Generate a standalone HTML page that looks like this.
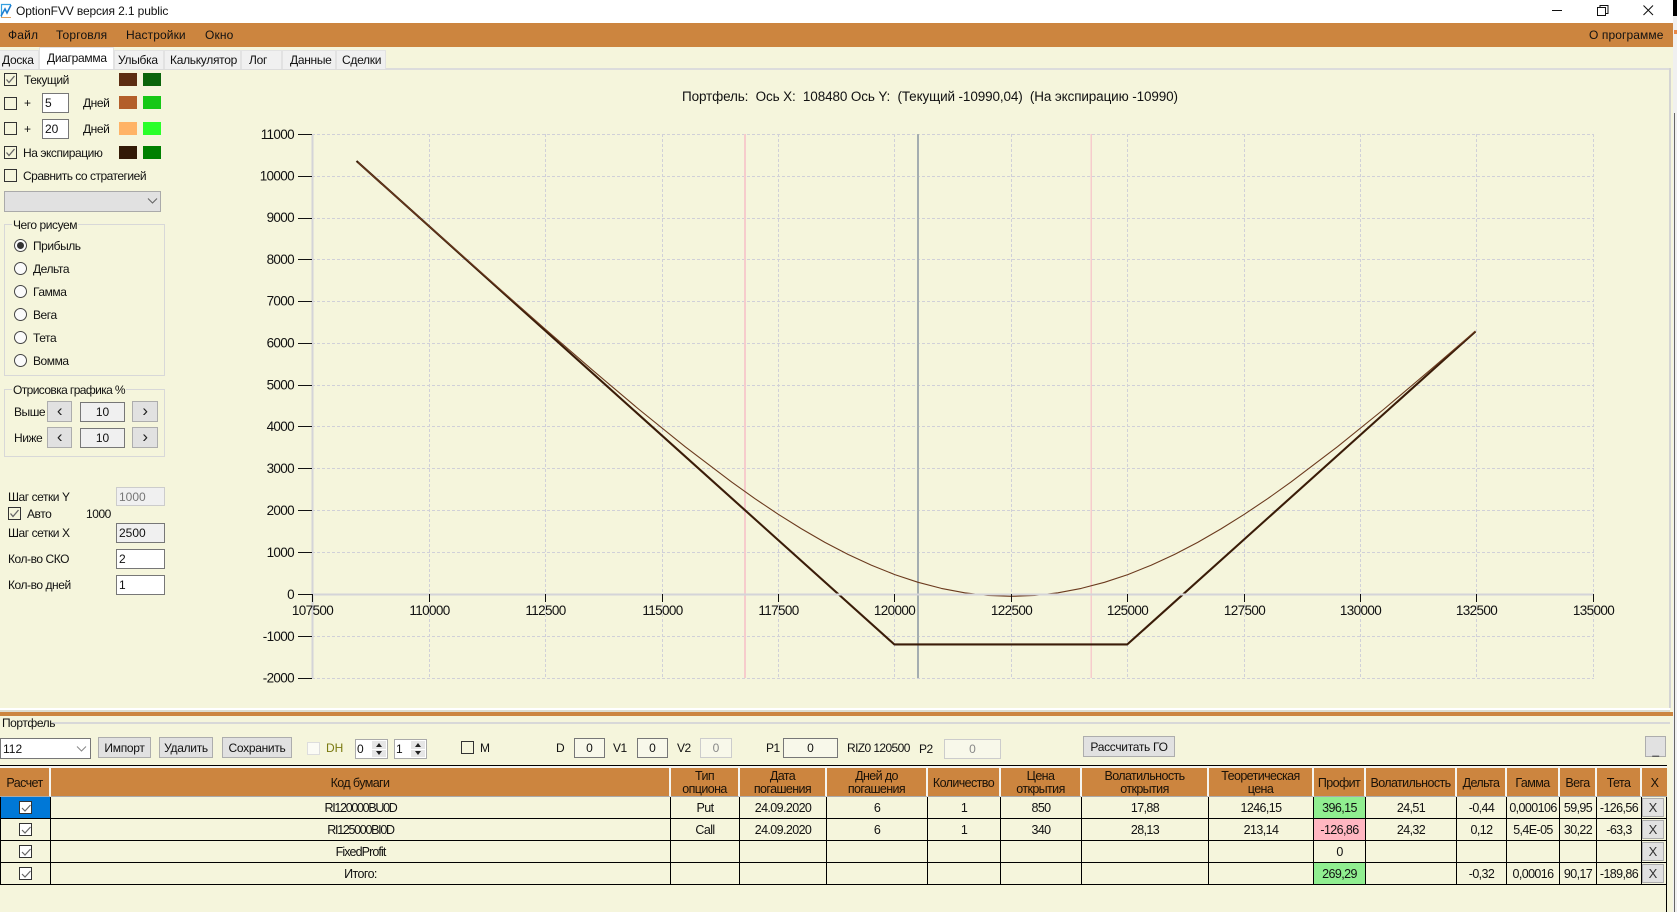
<!DOCTYPE html>
<html lang="ru"><head><meta charset="utf-8"><title>OptionFVV</title>
<style>
*{box-sizing:border-box}
html,body{margin:0;padding:0;width:1677px;height:912px;overflow:hidden;background:#f5f5dc;font-family:"Liberation Sans",sans-serif;font-size:12px;color:#111}
.a,.t,.cb,.i,.b,.r{position:absolute}
.t{white-space:nowrap;line-height:14px;letter-spacing:-.45px}
.cb{width:13px;height:13px;border:1px solid #333}
.cb svg,.tc svg{display:block}
.i{border:1px solid #777;display:flex;align-items:center;padding-left:2px;background:#fff;line-height:14px}
.c{justify-content:center;padding-left:0}
.b{background:#e1e1e1;border:1px solid #adadad;display:flex;align-items:center;justify-content:center;line-height:14px;letter-spacing:-.3px}
.ar{font-size:17px;line-height:17px;padding-bottom:2px;color:#222}
.r{width:13px;height:13px;border:1px solid #444;border-radius:50%;background:#fbfbfb}
.g{position:absolute;border:1px solid #d8d8d8}
.lg{position:absolute;background:#f5f5dc;padding:0 1px;line-height:14px;white-space:nowrap;letter-spacing:-.45px}
.tab{position:absolute;top:50px;height:19px;background:#f0f0f0;border:1px solid #e2e2e2;border-bottom:0;line-height:18px;white-space:nowrap;letter-spacing:-.3px}
table{position:absolute;left:0;top:766px;width:1667px;table-layout:fixed;border-collapse:separate;border-spacing:0;font-size:12.5px;letter-spacing:-.6px}
th{font-weight:normal;height:31px;background:#cc853f;border-top:2px solid #f5f5f0;border-bottom:1px solid #aaa;border-right:2px solid #f5f5f0;text-align:center;line-height:13px;padding:2px 0 0;color:#1a1208}
td{height:22px;border-right:1px solid #000;border-bottom:1px solid #000;text-align:center;padding:0;line-height:20px;overflow:hidden}
td:first-child{border-left:1px solid #000}
.tc svg{margin:0 auto;background:#fff;border:1px solid #333}
.xb{display:block;height:19px;margin:0 2px 0 0;background:#e1e1e1;border:1px solid #adadad;line-height:18px;letter-spacing:0;font-size:13px;color:#333}
.nr{letter-spacing:-1.3px}
</style></head><body>

<!-- title bar -->
<div class="a" style="left:0;top:0;width:1677px;height:23px;background:#fff"></div>
<svg class="a" style="left:0;top:2px" width="13" height="17" viewBox="0 0 13 17"><path d="M11 2.500H1.500V15.500" fill="none" stroke="#35a0e0" stroke-width="1.200"/><path d="M1 14 5 7 7 11 11 3" fill="none" stroke="#1f7fd0" stroke-width="1.600"/><path d="M1 15.500H11" stroke="#e0a060" stroke-width="1"/></svg>
<div class="t" style="left:16px;top:4px;letter-spacing:-.12px">OptionFVV версия 2.1 public</div>
<svg class="a" style="left:1540px;top:0" width="137" height="23" viewBox="0 0 137 23"><path d="M12 10.500H22" stroke="#111"/><path d="M57.500 7.500h8v8h-8zM60 7.500V5.500h8v8h-2.500" fill="none" stroke="#111"/><path d="M103.500 5.500 113 15M113 5.500 103.500 15" stroke="#111" fill="none"/></svg>
<div class="a" style="left:1673px;top:0;width:4px;height:16px;background:#000"></div>

<!-- menu -->
<div class="a" style="left:0;top:23px;width:1673px;height:24px;background:#cc853f"></div>
<div class="t" style="left:8px;top:28px;letter-spacing:.15px">Файл</div>
<div class="t" style="left:56px;top:28px;letter-spacing:.15px">Торговля</div>
<div class="t" style="left:126px;top:28px;letter-spacing:.1px">Настройки</div>
<div class="t" style="left:205px;top:28px;letter-spacing:.15px">Окно</div>
<div class="t" style="left:1589px;top:28px;letter-spacing:.1px">О программе</div>

<!-- right strip -->
<div class="a" style="left:1673px;top:16px;width:4px;height:896px;background:#f0f0f0"></div>
<div class="a" style="left:1674px;top:113px;width:1px;height:799px;background:#666"></div>
<div class="a" style="left:1674px;top:30px;width:3px;height:4px;background:#e88a4a"></div>

<!-- tabs -->
<div class="a" style="left:0;top:68px;width:1671px;height:1.500px;background:#dcdcdc"></div>
<div class="a" style="left:1669px;top:68px;width:2px;height:640px;background:#d4d4d4"></div>
<div class="tab" style="left:0;width:39px;padding-left:2px;border-left:0">Доска</div>
<div class="tab" style="left:39px;top:47px;height:22px;width:75px;padding-left:7px;background:#fff;line-height:20px">Диаграмма</div>
<div class="tab" style="left:114px;width:50px;padding-left:3px">Улыбка</div>
<div class="tab" style="left:164px;width:77px;padding-left:5px">Калькулятор</div>
<div class="tab" style="left:241px;width:41px;padding-left:7px">Лог</div>
<div class="tab" style="left:282px;width:54px;padding-left:7px">Данные</div>
<div class="tab" style="left:336px;width:50px;padding-left:5px">Сделки</div>

<!-- left controls -->
<div class="cb" style="left:4px;top:73px"><svg width="11" height="11"><path d="M1.500 5.500 4 8.500 9.500 2" fill="none" stroke="#666" stroke-width="1.300"/></svg></div>
<div class="t" style="left:24px;top:73px">Текущий</div>
<div class="a" style="left:119px;top:73px;width:18px;height:13px;background:#5c2d12"></div>
<div class="a" style="left:143px;top:73px;width:18px;height:13px;background:#0a640a"></div>

<div class="cb" style="left:4px;top:97px"></div>
<div class="t" style="left:24px;top:96px">+</div>
<div class="i" style="left:42px;top:93px;width:27px;height:20px">5</div>
<div class="t" style="left:83px;top:96px">Дней</div>
<div class="a" style="left:119px;top:96px;width:18px;height:13px;background:#b35f2a"></div>
<div class="a" style="left:143px;top:96px;width:18px;height:13px;background:#16c816"></div>

<div class="cb" style="left:4px;top:122px"></div>
<div class="t" style="left:24px;top:122px">+</div>
<div class="i" style="left:42px;top:119px;width:27px;height:20px">20</div>
<div class="t" style="left:83px;top:122px">Дней</div>
<div class="a" style="left:119px;top:122px;width:18px;height:13px;background:#ffb366"></div>
<div class="a" style="left:143px;top:122px;width:18px;height:13px;background:#2aff2a"></div>

<div class="cb" style="left:4px;top:146px"><svg width="11" height="11"><path d="M1.500 5.500 4 8.500 9.500 2" fill="none" stroke="#666" stroke-width="1.300"/></svg></div>
<div class="t" style="left:23px;top:146px">На экспирацию</div>
<div class="a" style="left:119px;top:146px;width:18px;height:13px;background:#331a06"></div>
<div class="a" style="left:143px;top:146px;width:18px;height:13px;background:#008000"></div>

<div class="cb" style="left:4px;top:169px"></div>
<div class="t" style="left:23px;top:169px;letter-spacing:-.5px">Сравнить со стратегией</div>
<div class="a" style="left:4px;top:191px;width:157px;height:21px;background:#e1e1e1;border:1px solid #aaa"></div>
<svg class="a" style="left:147px;top:197px" width="11" height="8"><path d="M1 1.500 5.500 6 10 1.500" fill="none" stroke="#666" stroke-width="1.100"/></svg>

<div class="g" style="left:4px;top:224px;width:161px;height:152px"></div>
<div class="lg" style="left:12px;top:218px">Чего рисуем</div>
<div class="r" style="left:14px;top:239px"></div><div class="a" style="left:17px;top:242px;width:7px;height:7px;border-radius:50%;background:#333"></div>
<div class="t" style="left:33px;top:239px">Прибыль</div>
<div class="r" style="left:14px;top:262px"></div><div class="t" style="left:33px;top:262px">Дельта</div>
<div class="r" style="left:14px;top:285px"></div><div class="t" style="left:33px;top:285px">Гамма</div>
<div class="r" style="left:14px;top:308px"></div><div class="t" style="left:33px;top:308px">Вега</div>
<div class="r" style="left:14px;top:331px"></div><div class="t" style="left:33px;top:331px">Тета</div>
<div class="r" style="left:14px;top:354px"></div><div class="t" style="left:33px;top:354px">Вомма</div>

<div class="g" style="left:4px;top:389px;width:161px;height:68px"></div>
<div class="lg" style="left:12px;top:383px;letter-spacing:-.6px">Отрисовка графика %</div>
<div class="t" style="left:14px;top:405px">Выше</div>
<div class="b ar" style="left:47px;top:401px;width:25px;height:21px">‹</div>
<div class="i c" style="left:80px;top:402px;width:45px;height:20px;background:#f0f0f0">10</div>
<div class="b ar" style="left:132px;top:401px;width:26px;height:21px">›</div>
<div class="t" style="left:14px;top:431px">Ниже</div>
<div class="b ar" style="left:47px;top:427px;width:25px;height:21px">‹</div>
<div class="i c" style="left:80px;top:428px;width:45px;height:20px;background:#f0f0f0">10</div>
<div class="b ar" style="left:132px;top:427px;width:26px;height:21px">›</div>

<div class="t" style="left:8px;top:490px">Шаг сетки Y</div>
<div class="i" style="left:116px;top:487px;width:49px;height:19px;background:#f0f0f0;border-color:#ccc;color:#777">1000</div>
<div class="cb" style="left:8px;top:507px"><svg width="11" height="11"><path d="M1.500 5.500 4 8.500 9.500 2" fill="none" stroke="#666" stroke-width="1.300"/></svg></div>
<div class="t" style="left:27px;top:507px">Авто</div>
<div class="t" style="left:86px;top:507px">1000</div>
<div class="t" style="left:8px;top:526px">Шаг сетки X</div>
<div class="i" style="left:116px;top:523px;width:49px;height:20px;background:#f0f0f0">2500</div>
<div class="t" style="left:8px;top:552px">Кол-во СКО</div>
<div class="i" style="left:116px;top:549px;width:49px;height:20px">2</div>
<div class="t" style="left:8px;top:578px">Кол-во дней</div>
<div class="i" style="left:116px;top:575px;width:49px;height:20px">1</div>

<!-- chart -->
<svg class="a" style="left:0;top:0" width="1677" height="912" viewBox="0 0 1677 912" font-family="Liberation Sans, sans-serif">
<g stroke="#d0d0d8" stroke-width="1" stroke-dasharray="3 2" fill="none">
<path d="M429.500 134V678M545.500 134V678M662.500 134V678M778.500 134V678M894.500 134V678M1011.500 134V678M1127.500 134V678M1244.500 134V678M1360.500 134V678M1476.500 134V678M1593.500 134V678"/>
<path d="M312 134.500H1594M312 176.500H1594M312 218.500H1594M312 259.500H1594M312 301.500H1594M312 343.500H1594M312 385.500H1594M312 426.500H1594M312 468.500H1594M312 510.500H1594M312 552.500H1594M312 636.500H1594M312 678.500H1594"/>
</g>
<rect x="744" y="134" width="2" height="544" fill="#f6cccc"/>
<rect x="1090.500" y="134" width="1.500" height="544" fill="#f6cccc"/>
<rect x="917" y="134" width="2" height="544" fill="#a4adb0"/>
<path d="M356.500 161 894.300 644.400H1127.300L1475.500 331.500" fill="none" stroke="#3a1c08" stroke-width="2.100" stroke-linejoin="round"/>
<path d="M358 162.500 405.500 205 452.100 246.600 498.700 288 545.300 329.100 591.900 369.600 638.500 409 685.100 446.700 731.700 482.100 755 498.700 778.300 514.300 801.600 528.900 824.900 542.400 848.200 554.500 871.500 565.200 894.800 574.600 918.100 582.300 941.400 588.400 964.700 592.800 988 595.500 1011.300 596.350 1034.600 595.500 1057.900 592.800 1081.200 588.400 1104.500 582.300 1127.800 574.600 1151.100 565.200 1174.400 554.500 1197.700 542.400 1221 528.900 1244.300 514.300 1267.600 498.700 1290.900 482.100 1337.500 446.700 1384.100 409 1430.700 369.600 1475.500 331" fill="none" stroke="#6b3a1e" stroke-width="1.100" stroke-linejoin="round"/>
<rect x="311.500" y="134" width="2" height="545" fill="#d4d4d8"/>
<rect x="312" y="593.500" width="1282" height="2" fill="#d4d4d8"/>
<g stroke="#111" stroke-width="1" fill="none">
<path d="M298 134.500H312M298 176.500H312M298 218.500H312M298 259.500H312M298 301.500H312M298 343.500H312M298 385.500H312M298 426.500H312M298 468.500H312M298 510.500H312M298 552.500H312M298 594.500H312M298 636.500H312M298 678.500H312"/>
<path d="M312.500 594V602M429.500 594V602M545.500 594V602M662.500 594V602M778.500 594V602M894.500 594V602M1011.500 594V602M1127.500 594V602M1244.500 594V602M1360.500 594V602M1476.500 594V602M1593.500 594V602"/>
</g>
<g font-size="13.500" fill="#111" text-anchor="end" letter-spacing="-.65">
<text x="294" y="139">11000</text><text x="294" y="180.500">10000</text><text x="294" y="222">9000</text><text x="294" y="264">8000</text><text x="294" y="305.500">7000</text><text x="294" y="347.500">6000</text><text x="294" y="389.500">5000</text><text x="294" y="431">4000</text><text x="294" y="473">3000</text><text x="294" y="515">2000</text><text x="294" y="557">1000</text><text x="294" y="599">0</text><text x="294" y="641">-1000</text><text x="294" y="682.500">-2000</text>
</g>
<g font-size="13.500" fill="#111" text-anchor="middle" letter-spacing="-.65">
<text x="312.500" y="615">107500</text><text x="429.500" y="615">110000</text><text x="545.500" y="615">112500</text><text x="662.500" y="615">115000</text><text x="778.500" y="615">117500</text><text x="894.500" y="615">120000</text><text x="1011.500" y="615">122500</text><text x="1127.500" y="615">125000</text><text x="1244.500" y="615">127500</text><text x="1360.500" y="615">130000</text><text x="1476.500" y="615">132500</text><text x="1593.500" y="615">135000</text>
</g>
<text x="682" y="101" font-size="13.500" fill="#111" xml:space="preserve" textLength="496">Портфель:  Ось X:  108480 Ось Y:  (Текущий -10990,04)  (На экспирацию -10990)</text>
</svg>

<!-- splitter -->
<div class="a" style="left:0;top:708px;width:1670px;height:2px;background:#fff"></div>
<div class="a" style="left:0;top:710px;width:1670px;height:2px;background:#dcdcd0"></div>
<div class="a" style="left:0;top:712px;width:1673px;height:4px;background:#cc853f"></div>

<!-- portfolio toolbar -->
<div class="a" style="left:52px;top:722px;width:1618px;height:1.500px;background:#d8d8d8"></div>
<div class="t" style="left:2px;top:716px">Портфель</div>
<div class="i" style="left:0;top:738px;width:91px;height:21px">112</div>
<svg class="a" style="left:76px;top:745px" width="11" height="8"><path d="M1 1.500 5.500 6 10 1.500" fill="none" stroke="#888" stroke-width="1"/></svg>
<div class="b" style="left:98px;top:737px;width:53px;height:21px">Импорт</div>
<div class="b" style="left:159px;top:737px;width:54px;height:21px">Удалить</div>
<div class="b" style="left:222px;top:737px;width:70px;height:21px">Сохранить</div>
<div class="a" style="left:307px;top:742px;width:13px;height:13px;background:#fbfbf5;border:1px solid #ddd"></div>
<div class="t" style="left:326px;top:741px;color:#7a7a10;letter-spacing:-.1px">DH</div>
<div class="i" style="left:355px;top:739px;width:33px;height:20px;border-color:#aaa;padding-left:1px">0</div>
<div class="a" style="left:372px;top:741px;width:14px;height:8px;background:#e6e6e6"></div><div class="a" style="left:372px;top:750px;width:14px;height:7px;background:#e6e6e6"></div>
<svg class="a" style="left:372px;top:741px" width="14" height="16"><path d="M7 2 10 6H4zM7 14 4 10H10z" fill="#222"/></svg>
<div class="i" style="left:394px;top:739px;width:33px;height:20px;border-color:#aaa;padding-left:1px">1</div>
<div class="a" style="left:411px;top:741px;width:14px;height:8px;background:#e6e6e6"></div><div class="a" style="left:411px;top:750px;width:14px;height:7px;background:#e6e6e6"></div>
<svg class="a" style="left:411px;top:741px" width="14" height="16"><path d="M7 2 10 6H4zM7 14 4 10H10z" fill="#222"/></svg>
<div class="cb" style="left:461px;top:741px"></div>
<div class="t" style="left:480px;top:741px;letter-spacing:-1px">M</div>
<div class="t" style="left:556px;top:741px">D</div>
<div class="i c" style="left:574px;top:738px;width:31px;height:20px;background:#f8f8ea">0</div>
<div class="t" style="left:613px;top:741px">V1</div>
<div class="i c" style="left:637px;top:738px;width:31px;height:20px;background:#f8f8ea">0</div>
<div class="t" style="left:677px;top:741px">V2</div>
<div class="i c" style="left:700px;top:738px;width:32px;height:20px;background:#f8f8ea;border-color:#ccc;color:#888">0</div>
<div class="t" style="left:766px;top:741px">P1</div>
<div class="i c" style="left:783px;top:738px;width:55px;height:20px;background:#f8f8ea">0</div>
<div class="t" style="left:847px;top:741px;letter-spacing:-.6px">RIZ0 120500</div>
<div class="t" style="left:919px;top:742px">P2</div>
<div class="i c" style="left:944px;top:739px;width:57px;height:20px;background:#f8f8ea;border-color:#ccc;color:#888">0</div>
<div class="b" style="left:1083px;top:736px;width:92px;height:21px">Рассчитать ГО</div>
<div class="b" style="left:1645px;top:736px;width:21px;height:21px;align-items:flex-end;line-height:12px">_</div>

<!-- table -->
<div class="a" style="left:0;top:765px;width:1667px;height:1.500px;background:#000"></div>
<div class="a" style="left:1666px;top:765px;width:1px;height:147px;background:#000"></div>
<table>
<colgroup><col style="width:51px"><col style="width:620px"><col style="width:69px"><col style="width:87px"><col style="width:101px"><col style="width:73px"><col style="width:81px"><col style="width:127px"><col style="width:105px"><col style="width:52px"><col style="width:91px"><col style="width:50px"><col style="width:53px"><col style="width:37px"><col style="width:45px"><col style="width:25px"></colgroup>
<tr><th>Расчет</th><th>Код бумаги</th><th>Тип<br>опциона</th><th>Дата<br>погашения</th><th>Дней до<br>погашения</th><th>Количество</th><th>Цена<br>открытия</th><th>Волатильность<br>открытия</th><th>Теоретическая<br>цена</th><th>Профит</th><th>Волатильность</th><th>Дельта</th><th>Гамма</th><th>Вега</th><th>Тета</th><th style="border-right:0">X</th></tr>
<tr><td class="tc" style="background:#0078d7"><svg width="13" height="13"><path d="M2 6 5 9 10.500 3" fill="none" stroke="#666" stroke-width="1.200"/></svg></td><td class="nr">RI120000BU0D</td><td>Put</td><td>24.09.2020</td><td>6</td><td>1</td><td>850</td><td>17,88</td><td>1246,15</td><td style="background:#90ee90">396,15</td><td>24,51</td><td>-0,44</td><td>0,000106</td><td>59,95</td><td>-126,56</td><td><span class="xb">X</span></td></tr>
<tr><td class="tc"><svg width="13" height="13"><path d="M2 6 5 9 10.500 3" fill="none" stroke="#666" stroke-width="1.200"/></svg></td><td class="nr">RI125000BI0D</td><td>Call</td><td>24.09.2020</td><td>6</td><td>1</td><td>340</td><td>28,13</td><td>213,14</td><td style="background:#ffb6c1">-126,86</td><td>24,32</td><td>0,12</td><td>5,4E-05</td><td>30,22</td><td>-63,3</td><td><span class="xb">X</span></td></tr>
<tr><td class="tc"><svg width="13" height="13"><path d="M2 6 5 9 10.500 3" fill="none" stroke="#666" stroke-width="1.200"/></svg></td><td style="letter-spacing:-.9px">FixedProfit</td><td></td><td></td><td></td><td></td><td></td><td></td><td></td><td>0</td><td></td><td></td><td></td><td></td><td></td><td><span class="xb">X</span></td></tr>
<tr><td class="tc"><svg width="13" height="13"><path d="M2 6 5 9 10.500 3" fill="none" stroke="#666" stroke-width="1.200"/></svg></td><td>Итого:</td><td></td><td></td><td></td><td></td><td></td><td></td><td></td><td style="background:#90ee90">269,29</td><td></td><td>-0,32</td><td>0,00016</td><td>90,17</td><td>-189,86</td><td><span class="xb">X</span></td></tr>
</table>
</body></html>
